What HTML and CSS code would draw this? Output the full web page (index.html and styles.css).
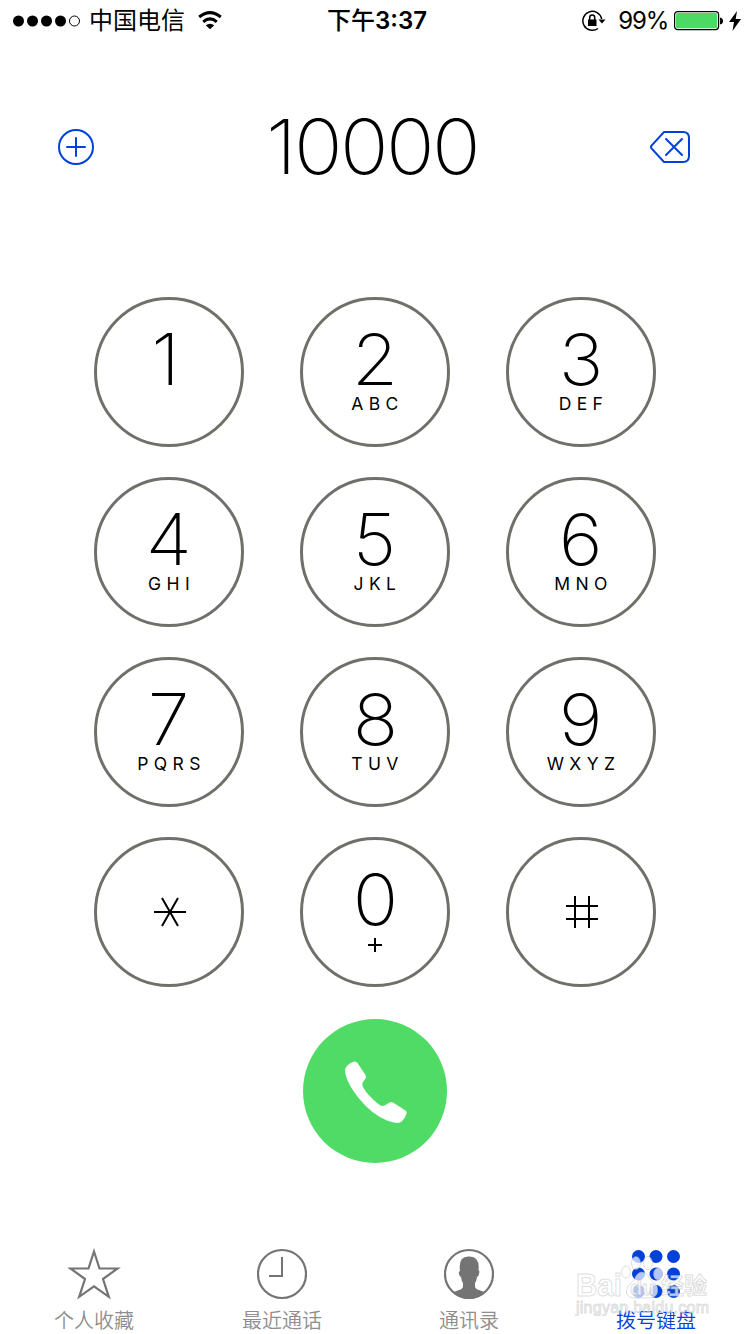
FILE: index.html
```
<!DOCTYPE html>
<html lang="zh-CN">
<head>
    <meta charset="UTF-8">
    <meta name="viewport" content="width=device-width, initial-scale=1.0">
    <title>拨号键盘</title>
    <link rel="stylesheet" href="styles.css">
</head>
<body>

<div class="phone">
    <header class="status-bar">
        <div class="status-left">
            <svg class="signal" width="68" height="12" viewBox="0 0 68 12">
                <circle cx="5.5" cy="6" r="5.5"/>
                <circle cx="19.5" cy="6" r="5.5"/>
                <circle cx="33.5" cy="6" r="5.5"/>
                <circle cx="47.5" cy="6" r="5.5"/>
                <circle cx="61.5" cy="6" r="5" fill="none" stroke="#000"/>
            </svg>
            <span class="carrier">中国电信</span>
            <svg class="wifi" width="24" height="19" viewBox="0 0 24 19">
                <path d="M1.2 6Q12-2.8 22.800 6" fill="none" stroke="#000" stroke-width="3"/>
                <path d="M5.200 10.800Q12 5 18.800 10.800" fill="none" stroke="#000" stroke-width="3"/>
                <path d="M7.800 14.300Q12 11 16.200 14.300L12 18.300Z"/>
            </svg>
        </div>
        <div class="time"><span class="period">下午</span>3:37</div>
        <div class="status-right">
            <svg class="lock" width="24" height="22" viewBox="0 0 24 22">
                <path d="M16 18.500A9.500 9.500 0 1 1 19.700 9" fill="none" stroke="#000" stroke-width="1.500"/>
                <path d="M16.500 9.500H23.500L20 13.500Z"/>
                <rect x="6" y="9.500" width="8.500" height="6.500"/>
                <path d="M7.700 10V7.500a2.500 2.500 0 0 1 5 0V10" fill="none" stroke="#000" stroke-width="1.500"/>
            </svg>
            <span class="percent">99%</span>
            <svg class="battery" width="49" height="20" viewBox="0 0 49 20">
                <rect x=".6" y=".6" width="44" height="18" rx="3" fill="#fff" stroke="#000" stroke-width="1.200"/>
                <rect x="2" y="2" width="41.200" height="15.200" rx="1.500" fill="#4cd964"/>
                <path d="M46 6.500Q49 7 49 10T46 13.500Z"/>
            </svg>
            <svg class="bolt" width="12" height="20" viewBox="0 0 12 20">
                <path d="M8 0L0 11H5L3.500 20L12 8H6.700Z"/>
            </svg>
        </div>
    </header>

    <div class="number-row">
        <svg class="add" width="36" height="36" viewBox="0 0 36 36">
            <circle cx="18" cy="18" r="17"/>
            <path d="M9 18H27M18 9V27"/>
        </svg>
        <div class="number">10000</div>
        <svg class="delete" width="40" height="32" viewBox="0 0 40 32">
            <path d="M14 1H33Q39 1 39 7V25Q39 31 33 31H14L1.500 17.500Q.500 16 1.500 14.500Z"/>
            <path d="M16 8L32 24M32 8L16 24"/>
        </svg>
    </div>

    <main class="keypad">
        <div class="key"><span class="digit one">1</span></div>
        <div class="key"><span class="digit">2</span><span class="letters">ABC</span></div>
        <div class="key"><span class="digit">3</span><span class="letters">DEF</span></div>
        <div class="key"><span class="digit">4</span><span class="letters">GHI</span></div>
        <div class="key"><span class="digit">5</span><span class="letters">JKL</span></div>
        <div class="key"><span class="digit">6</span><span class="letters">MNO</span></div>
        <div class="key"><span class="digit">7</span><span class="letters">PQRS</span></div>
        <div class="key"><span class="digit">8</span><span class="letters">TUV</span></div>
        <div class="key"><span class="digit">9</span><span class="letters">WXYZ</span></div>
        <div class="key symbol">
            <svg width="34" height="32" viewBox="0 0 34 32">
                <path d="M2 16H34M10 2L26 30M26 2L10 30"/>
            </svg>
        </div>
        <div class="key">
            <span class="digit">0</span>
            <svg class="plus" width="14" height="14" viewBox="0 0 14 14">
                <path d="M0 7H14M7 0V14"/>
            </svg>
        </div>
        <div class="key symbol">
            <svg width="34" height="32" viewBox="0 0 34 32">
                <path d="M2 10H34M2 23H34M11 0V32M25 0V32"/>
            </svg>
        </div>
    </main>

    <div class="call">
        <svg width="62" height="62" viewBox="0 0 62 62">
            <path d="M9 .5Q11 0 12.500 2L20.500 14Q21.500 15.800 20.500 17.500L17.700 21.500Q17 23 17.700 25.500Q22 34 34 43.500Q37 46 40.500 44L45 41.300Q46.500 40.700 48 41.500L60.500 49.500Q62 50.500 61.500 52.500Q59 59.500 55 61.500Q51 63 42 59.500Q27 53.500 14 37.500Q.500 20.500 0 9.500Q.500 3.500 9 .500Z" fill="#fff"/>
        </svg>
    </div>

    <nav class="tab-bar">
        <div class="tab">
            <svg width="54" height="52" viewBox="0 0 54 52">
                <path d="M27 3.500L32.500 20.500H50.500L36 31L41.800 48.800L27 38.300L12.200 48.800L18 31L3.500 20.500H21.500Z" fill="none" stroke="#747474" stroke-width="2.200"/>
            </svg>
            <span>个人收藏</span>
        </div>
        <div class="tab">
            <svg width="50" height="52" viewBox="0 0 50 52">
                <circle cx="25" cy="26" r="24" fill="none" stroke="#747474" stroke-width="2.200"/>
                <path d="M25 9V28H12" fill="none" stroke="#747474" stroke-width="2"/>
            </svg>
            <span>最近通话</span>
        </div>
        <div class="tab">
            <svg width="50" height="52" viewBox="0 0 50 52">
                <circle cx="25" cy="26" r="24" fill="none" stroke="#747474" stroke-width="2.200"/>
                <path d="M16 23Q14 8 25 8.500Q36 8 34.500 22.500Q36 22 35 26Q34.500 29 33 29Q32.500 33 31 35V38Q31 41 35 42L41.500 44.500Q34 51 25 51T8.500 44.500L15 42Q19 41 19 38V35Q17.500 33 17 29Q15.500 29 15 26Q14.500 23 16 23Z" fill="#747474"/>
            </svg>
            <span>通讯录</span>
        </div>
        <div class="tab active">
            <svg width="50" height="52" viewBox="0 0 50 52">
                <g fill="#0041dc">
                    <circle cx="7.500" cy="8.500" r="6.500"/>
                    <circle cx="25" cy="8.500" r="6.500"/>
                    <circle cx="42.500" cy="8.500" r="6.500"/>
                    <circle cx="7.500" cy="26" r="6.500"/>
                    <circle cx="25" cy="26" r="6.500"/>
                    <circle cx="42.500" cy="26" r="6.500"/>
                    <circle cx="7.500" cy="43.500" r="6.500"/>
                    <circle cx="25" cy="43.500" r="6.500"/>
                    <circle cx="42.500" cy="43.500" r="6.500"/>
                </g>
            </svg>
            <span>拨号键盘</span>
        </div>
        <svg class="watermark" width="140" height="68" viewBox="0 0 140 68">
            <g class="paw">
                <ellipse cx="55" cy="24" rx="4.500" ry="6"/>
                <ellipse cx="65" cy="15" rx="4.500" ry="6.500"/>
                <ellipse cx="77" cy="15" rx="4.500" ry="6.500"/>
                <ellipse cx="87" cy="26" rx="4.500" ry="6"/>
                <path d="M71 24Q76 24 79 31L86 38Q89 49 79 50H62Q52 48 57 38L63 32Q66 24 71 24Z"/>
            </g>
            <text class="mark" x="5" y="48" textLength="46" lengthAdjust="spacingAndGlyphs">Bai</text>
            <text class="mark-du" x="59" y="47">du</text>
            <text class="mark-cn" x="90" y="46">经验</text>
            <text class="mark-url" x="5" y="65" textLength="133">jingyan.baidu.com</text>
        </svg>
    </nav>
</div>

</body>
</html>
```
FILE: styles.css
```
* {
    box-sizing: border-box;
}

body {
    margin: 0;
    background-color: #fff;
    color: #000;
    font-family: Inter, "Noto Sans CJK SC", sans-serif;
}

svg {
    display: block;
    flex-shrink: 0;
}

.phone {
    width: 750px;
    height: 1334px;
    display: flex;
    flex-direction: column;
    overflow: hidden;
}

/* Status bar */
.status-bar {
    height: 41px;
    display: grid;
    grid-template-columns: 1fr auto 1fr;
    align-items: center;
    padding: 0 9px 0 13px;
    font-size: 24px;
    line-height: 41px;
}

.status-left, .status-right {
    display: flex;
    align-items: center;
}

.status-right {
    justify-content: flex-end;
}

.carrier {
    margin: 0 13px 0 8px;
}

.wifi {
    margin-top: -1px;
}

.time {
    font-weight: 600;
}

.period {
    font-weight: 500;
}

.percent {
    margin: 0 6px 0 12px;
    letter-spacing: -1.2px;
}

.bolt {
    margin-left: 6px;
}

/* Typed number */
.number-row {
    height: 212px;
    padding: 0 60px 0 58px;
    display: flex;
    align-items: center;
    justify-content: space-between;
}

.number {
    font-size: 76px;
    font-weight: 200;
    line-height: 80px;
    letter-spacing: -2.5px;
    margin-top: -2px;
    transform: scaleX(1.06);
}

.add, .delete {
    fill: none;
    stroke: #0041dc;
    stroke-width: 2;
    stroke-linecap: round;
}

/* Keypad */
.keypad {
    margin: 44px auto 0;
    display: grid;
    grid-template-columns: repeat(3, 150px);
    grid-auto-rows: 150px;
    gap: 30px 56px;
}

.key {
    border: 3px solid #70706a;
    border-radius: 50%;
    display: flex;
    flex-direction: column;
    align-items: center;
    padding-top: 24px;
}

.key svg {
    fill: none;
    stroke: #000;
    stroke-width: 2;
}

.key.symbol {
    justify-content: center;
    padding-top: 0;
}

.digit {
    font-size: 71px;
    font-weight: 200;
    line-height: 70px;
    transform: scaleX(1.06);
}

.digit.one {
    margin-right: 6px;
}

.letters {
    font-size: 17.5px;
    line-height: 22px;
    letter-spacing: 5.4px;
    margin: -1px -5px 0 0;
}

.plus {
    margin-top: 4px;
}

/* Call button */
.call {
    width: 144px;
    height: 144px;
    margin: 32px auto 0;
    padding: 2px 0 0 2px;
    border-radius: 50%;
    background-color: #4fdb66;
    display: flex;
    align-items: center;
    justify-content: center;
}

/* Tabs */
.tab-bar {
    position: relative;
    margin-top: 85px;
    height: 86px;
    display: grid;
    grid-template-columns: 188px 188px 186px 188px;
}

.tab {
    display: flex;
    flex-direction: column;
    align-items: center;
    font-size: 20px;
    font-weight: 350;
    line-height: 28px;
    color: #8e8e8e;
}

.tab span {
    margin-top: 7px;
}

.tab.active {
    color: #0041dc;
}

/* Site mark over the last tab */
.watermark {
    position: absolute;
    left: 571px;
    top: 0;
    fill: rgba(255, 255, 255, 0.7);
    stroke: rgba(170, 170, 170, 0.4);
    stroke-width: 1;
}

.mark, .mark-du {
    font-family: "Liberation Sans", sans-serif;
    font-weight: bold;
    font-size: 31px;
}

.mark-du {
    font-size: 20px;
}

.mark-cn {
    font-family: "Noto Sans CJK SC", sans-serif;
    font-weight: bold;
    font-size: 23px;
}

.mark-url {
    font-family: "Liberation Sans", sans-serif;
    font-size: 16px;
}
```
